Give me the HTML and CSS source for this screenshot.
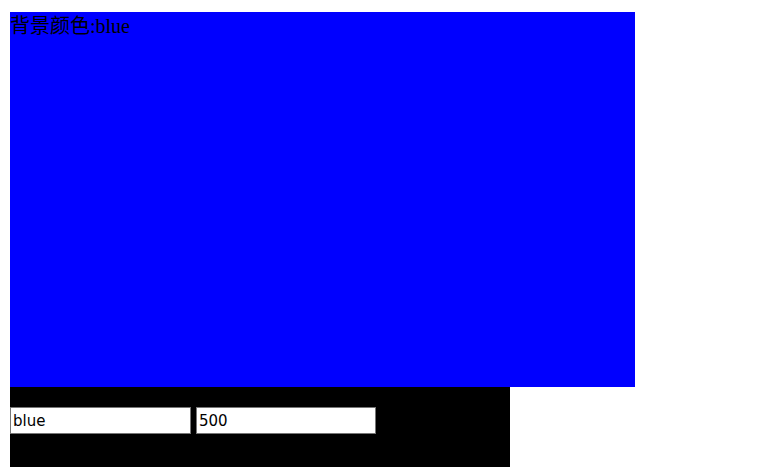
FILE: index.html
```html
<!DOCTYPE html>
<html lang="zh">
<head>
    <meta charset="UTF-8">
    <title>背景颜色</title>
    <link rel="stylesheet" href="styles.css">
</head>
<body>
    <div class="panel">背景颜色:blue</div>
    <div class="controls">
        <input type="text" class="field field-color" value="blue">
        <input type="text" class="field" value="500">
    </div>
</body>
</html>
```
FILE: styles.css
```css
body {
    margin: 12px 10px;
    font-family: 'Liberation Serif', 'Noto Sans CJK SC', serif;
}

.panel {
    width: 625px;
    height: 375px;
    background-color: blue;
    color: black;
    font-size: 20px;
    line-height: 28px;
}

.controls {
    display: flex;
    align-items: flex-start;
    gap: 5px;
    width: 500px;
    height: 100px;
    box-sizing: border-box;
    padding-top: 20px;
    background-color: black;
}

.field {
    width: 180px;
    height: 27px;
    box-sizing: border-box;
    margin: 0;
    padding: 1px 2px;
    border: 1px solid #767676;
    font-family: 'DejaVu Sans', sans-serif;
    font-size: 15px;
    color: black;
    background-color: white;
}

.field-color {
    width: 181px;
}
```
